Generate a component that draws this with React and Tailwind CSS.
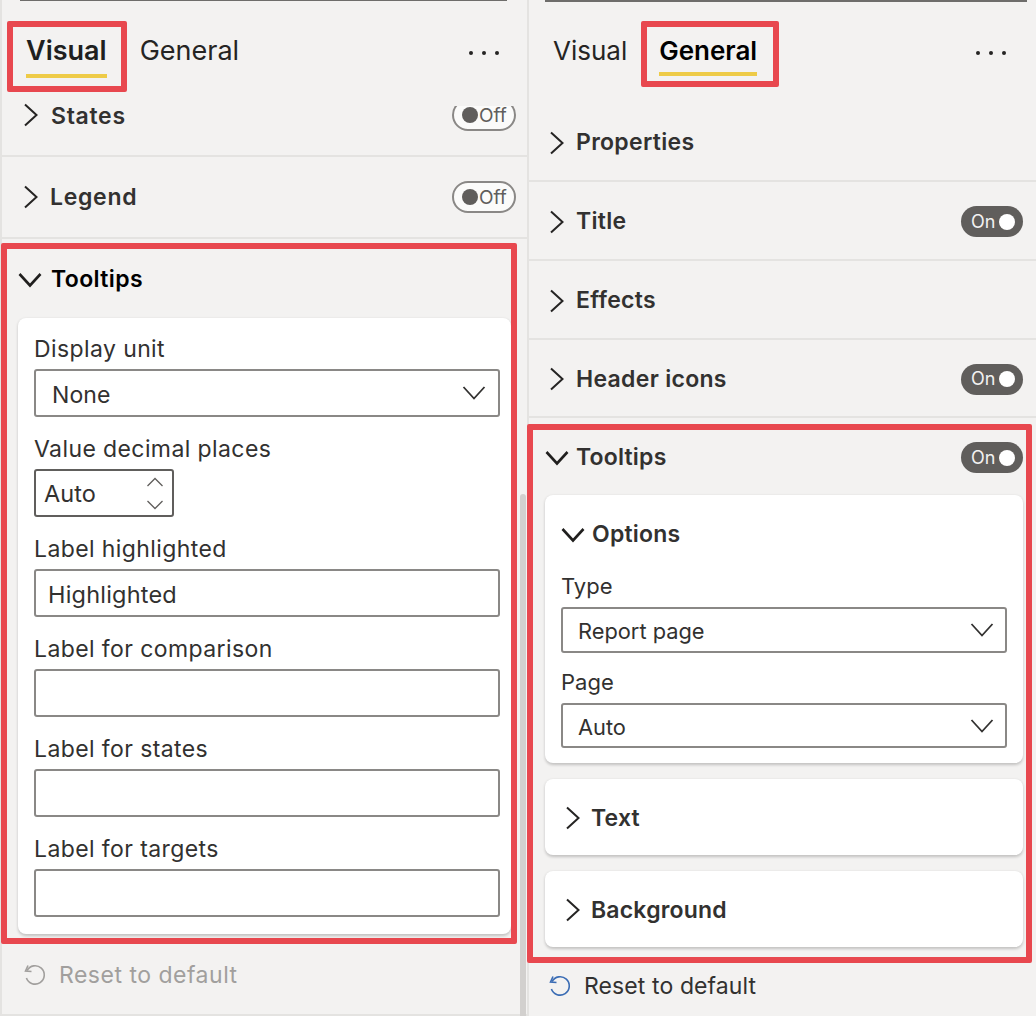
import React from 'react';

const ChevronRight = ({ className = '' }) => (
  <svg className={className} width="16" height="24" viewBox="0 0 16 24" fill="none" stroke="#252423" strokeWidth="2">
    <path d="M2 1.5 L13.5 12 L2 22.5" />
  </svg>
);

const ChevronDown = ({ className = '', color = '#201f1e', strokeWidth = 2.6 }) => (
  <svg className={className} width="24" height="16" viewBox="0 0 24 16" fill="none" stroke={color} strokeWidth={strokeWidth}>
    <path d="M1.5 2 L12 13.5 L22.5 2" />
  </svg>
);

const ResetIcon = ({ color }) => (
  <svg width="24" height="26" viewBox="0 0 24 26" fill="none" stroke={color} strokeWidth="1.6">
    <path d="M5 3.5 L2.5 9 L8.5 9.5" />
    <path d="M4 8.5 A9.2 9.2 0 1 1 3.4 16" />
  </svg>
);

const ToggleOff = () => (
  <div className="w-[64px] h-[32px] shrink-0 rounded-full border-2 border-[#8a8886] bg-[#fbfbfa] flex items-center pl-[8px] gap-[1px] text-[19px] text-[#605e5c] leading-none">
    <span className="w-[16px] h-[16px] rounded-full bg-[#605e5c]" />
    <span>Off</span>
  </div>
);

const ToggleOn = () => (
  <div className="w-[62px] h-[31px] shrink-0 rounded-full bg-[#605e5c] flex items-center pl-[10px] gap-[4px] text-[18px] text-[#f3f2f1] leading-none">
    <span>On</span>
    <span className="w-[16px] h-[16px] rounded-full bg-white" />
  </div>
);

const Dots = () => (
  <div className="ml-auto mt-[51px] flex gap-[9px]">
    <span className="w-[4px] h-[4px] rounded-full bg-[#252423]" />
    <span className="w-[4px] h-[4px] rounded-full bg-[#252423]" />
    <span className="w-[4px] h-[4px] rounded-full bg-[#252423]" />
  </div>
);

const Section = ({ title, toggle, height, className = '', tracking = 'tracking-[0.3px]' }) => (
  <div className={`flex items-center border-b-2 border-[#e4e3e1] ${height} ${className}`}>
    <ChevronRight className="shrink-0" />
    <span className={`ml-[11px] font-semibold text-[23px] text-[#323130] ${tracking}`}>{title}</span>
    <div className="ml-auto">{toggle}</div>
  </div>
);

const FieldLabel = ({ children, height = 'h-[52px]' }) => (
  <div className={`${height} pb-[4px] flex items-end text-[23px] leading-[32px] text-[#323130] tracking-[0.4px]`}>{children}</div>
);

const Field = ({ label, value }) => (
  <div className="h-[100px]">
    <FieldLabel>{label}</FieldLabel>
    <input
      readOnly
      value={value || ''}
      className="block w-full h-[48px] px-[12px] pt-[2px] bg-white border-2 border-[#8a8886] rounded-[3px] text-[23.5px] text-[#323130] tracking-[0.2px] outline-none"
    />
  </div>
);

const SelectBox = ({ value, className, textClass }) => (
  <div className={`flex items-center justify-between bg-white border-2 border-[#8a8886] rounded-[3px] ${className}`}>
    <span className={`text-[#323130] ${textClass}`}>{value}</span>
    <ChevronDown color="#323130" strokeWidth={1.8} />
  </div>
);

const SubCard = ({ title }) => (
  <div className="h-[76px] flex items-center pl-[20px] pt-[2px] bg-white rounded-lg shadow-[0_1.5px_3px_rgba(0,0,0,0.2)]">
    <ChevronRight className="shrink-0" />
    <span className="ml-[10px] font-semibold text-[23px] text-[#323130] tracking-[0.2px]">{title}</span>
  </div>
);

const LeftPanel = () => (
  <div className="w-[527px] shrink-0 h-full border-l-2 border-[#e4e3e1] border-b-2">
    <div className="ml-[18px] mr-[20px] h-[1px] bg-[#6e6d6b]" />
    <div className="-mt-[1px] h-[106px] flex items-start pl-[24px] pr-[28px]">
      <div className="pt-[32px] flex gap-[33px] text-[27px] leading-[38px] text-[#252423]">
        <div className="font-semibold text-[#201f1e]">
          Visual
          <div className="h-[4px] mt-[4px] bg-[#eecb47]" />
        </div>
        <div>General</div>
      </div>
      <Dots />
    </div>
    <div className="h-[51px] flex items-start border-b-2 border-[#e4e3e1] pl-[21px] pr-[11px]">
      <ChevronRight className="shrink-0 mt-[-3px]" />
      <span className="ml-[12px] font-semibold text-[23px] leading-[20px] text-[#323130] tracking-[0.7px]">States</span>
      <div className="ml-auto h-[25px] overflow-hidden">
        <div className="-mt-[7px]"><ToggleOff /></div>
      </div>
    </div>
    <Section title="Legend" height="h-[82px]" className="pl-[21px] pr-[11px]" tracking="tracking-[0.7px]" toggle={<ToggleOff />} />
    <div className="h-[79px] pt-[2px] flex items-center pl-[16px]">
      <ChevronDown className="shrink-0" />
      <span className="ml-[9px] font-semibold text-[23px] text-black tracking-[0.4px]">Tooltips</span>
    </div>
    <div className="ml-[16px] mr-[16px] pl-[16px] pr-[11px] pb-[17px] bg-white rounded-lg shadow-[0_1.5px_3px_rgba(0,0,0,0.2)]">
      <div className="h-[99px]">
        <FieldLabel height="h-[51px]">Display unit</FieldLabel>
        <SelectBox
          value="None"
          className="h-[48px] pl-[16px] pr-[12px]"
          textClass="text-[23px] tracking-[0.1px] pt-[4px]"
        />
      </div>
      <div className="h-[100px]">
        <FieldLabel>Value decimal places</FieldLabel>
        <div className="w-[140px] h-[48px] flex items-center justify-between pl-[8px] pr-[8px] bg-white border-2 border-[#605e5c] rounded-[3px]">
          <span className="text-[23.5px] text-[#323130] tracking-[0.1px] pt-[1px]">Auto</span>
          <div className="flex flex-col gap-[13px]">
            <svg width="18" height="10" viewBox="0 0 18 10" fill="none" stroke="#605e5c" strokeWidth="1.3"><path d="M1.5 9 L9 1.5 L16.5 9" /></svg>
            <svg width="18" height="10" viewBox="0 0 18 10" fill="none" stroke="#605e5c" strokeWidth="1.3"><path d="M1.5 1 L9 8.5 L16.5 1" /></svg>
          </div>
        </div>
      </div>
      <Field label="Label highlighted" value="Highlighted" />
      <Field label="Label for comparison" />
      <Field label="Label for states" />
      <Field label="Label for targets" />
    </div>
    <div className="flex items-center h-[80px] pt-[2px] pl-[21px] gap-[12px] text-[23px] text-[#a19f9d] tracking-[0.5px]">
      <ResetIcon color="#a19f9d" />
      <span>Reset to default</span>
    </div>
  </div>
);

const RightPanel = () => (
  <div className="flex-1 h-full border-l-2 border-[#e4e3e1]">
    <div className="ml-[16px] mr-[9px] h-[2px] bg-[#6e6d6b]" />
    <div className="-mt-[2px] h-[103px] flex items-start pl-[24px] pr-[30px]">
      <div className="pt-[32px] flex gap-[32px] text-[26px] leading-[38px] text-[#252423]">
        <div>Visual</div>
        <div className="font-semibold text-black">
          General
          <div className="h-[4px] mt-[2px] bg-[#eecb47]" />
        </div>
      </div>
      <Dots />
    </div>
    <Section title="Properties" height="h-[79px]" className="pt-[2px] pl-[20px] pr-[13px]" />
    <Section title="Title" height="h-[79px]" className="pt-[2px] pl-[20px] pr-[13px]" toggle={<ToggleOn />} />
    <Section title="Effects" height="h-[79px]" className="pt-[2px] pl-[20px] pr-[13px]" />
    <Section title="Header icons" height="h-[78px]" className="pt-[2px] pl-[20px] pr-[13px]" toggle={<ToggleOn />} />
    <div className="h-[77px] pt-[2px] flex items-center pl-[16px] pr-[13px]">
      <ChevronDown className="shrink-0" />
      <span className="ml-[7px] font-semibold text-[23px] text-[#323130] tracking-[0.2px]">Tooltips</span>
      <div className="ml-auto"><ToggleOn /></div>
    </div>
    <div className="ml-[16px] mr-[13px] flex flex-col gap-[16px]">
      <div className="h-[268px] px-[16px] bg-white rounded-lg shadow-[0_1.5px_3px_rgba(0,0,0,0.2)]">
        <div className="h-[74px] pt-[5px] flex items-center">
          <ChevronDown className="shrink-0" />
          <span className="ml-[7px] font-semibold text-[23px] text-[#323130] tracking-[0.2px]">Options</span>
        </div>
        <div className="h-[38px] pb-[4px] flex items-center text-[22px] text-[#323130]">Type</div>
        <SelectBox
          value="Report page"
          className="h-[46px] pl-[15px] pr-[11px]"
          textClass="text-[21.8px] pt-[3px]"
        />
        <div className="h-[50px] pt-[9px] flex items-center text-[22px] text-[#323130]">Page</div>
        <SelectBox
          value="Auto"
          className="h-[45px] pl-[15px] pr-[11px]"
          textClass="text-[21.8px] pt-[3px]"
        />
      </div>
      <SubCard title="Text" />
      <SubCard title="Background" />
    </div>
    <div className="flex items-center h-[62px] pt-[16px] pl-[19px] gap-[12px] text-[23px] text-[#323130] tracking-[0.1px]">
      <ResetIcon color="#3a6cb4" />
      <span>Reset to default</span>
    </div>
  </div>
);

export default function App() {
  return (
    <div className="relative w-[1036px] h-[1016px] flex overflow-hidden bg-[#f3f2f1] font-['Inter',sans-serif]">
      <LeftPanel />
      <RightPanel />

      {/* scrollbar thumb of the left shot */}
      <div className="absolute left-[520px] top-[494px] bottom-0 w-[6px] bg-[#d2d0ce] rounded-t-[3px]" />

      {/* red callouts over the screenshots */}
      <div className="absolute left-[7px] top-[21px] w-[120px] h-[71px] border-[6px] border-[#e8484f] rounded-[2px]" />
      <div className="absolute left-[641px] top-[21px] w-[138px] h-[66px] border-[6px] border-[#e8484f] rounded-[2px]" />
      <div className="absolute left-[1px] top-[243px] w-[516px] h-[701px] border-[6px] border-[#e8484f] rounded-[2px]" />
      <div className="absolute left-[527px] top-[424px] w-[505px] h-[539px] border-[6px] border-[#e8484f] rounded-[2px]" />
    </div>
  );
}
